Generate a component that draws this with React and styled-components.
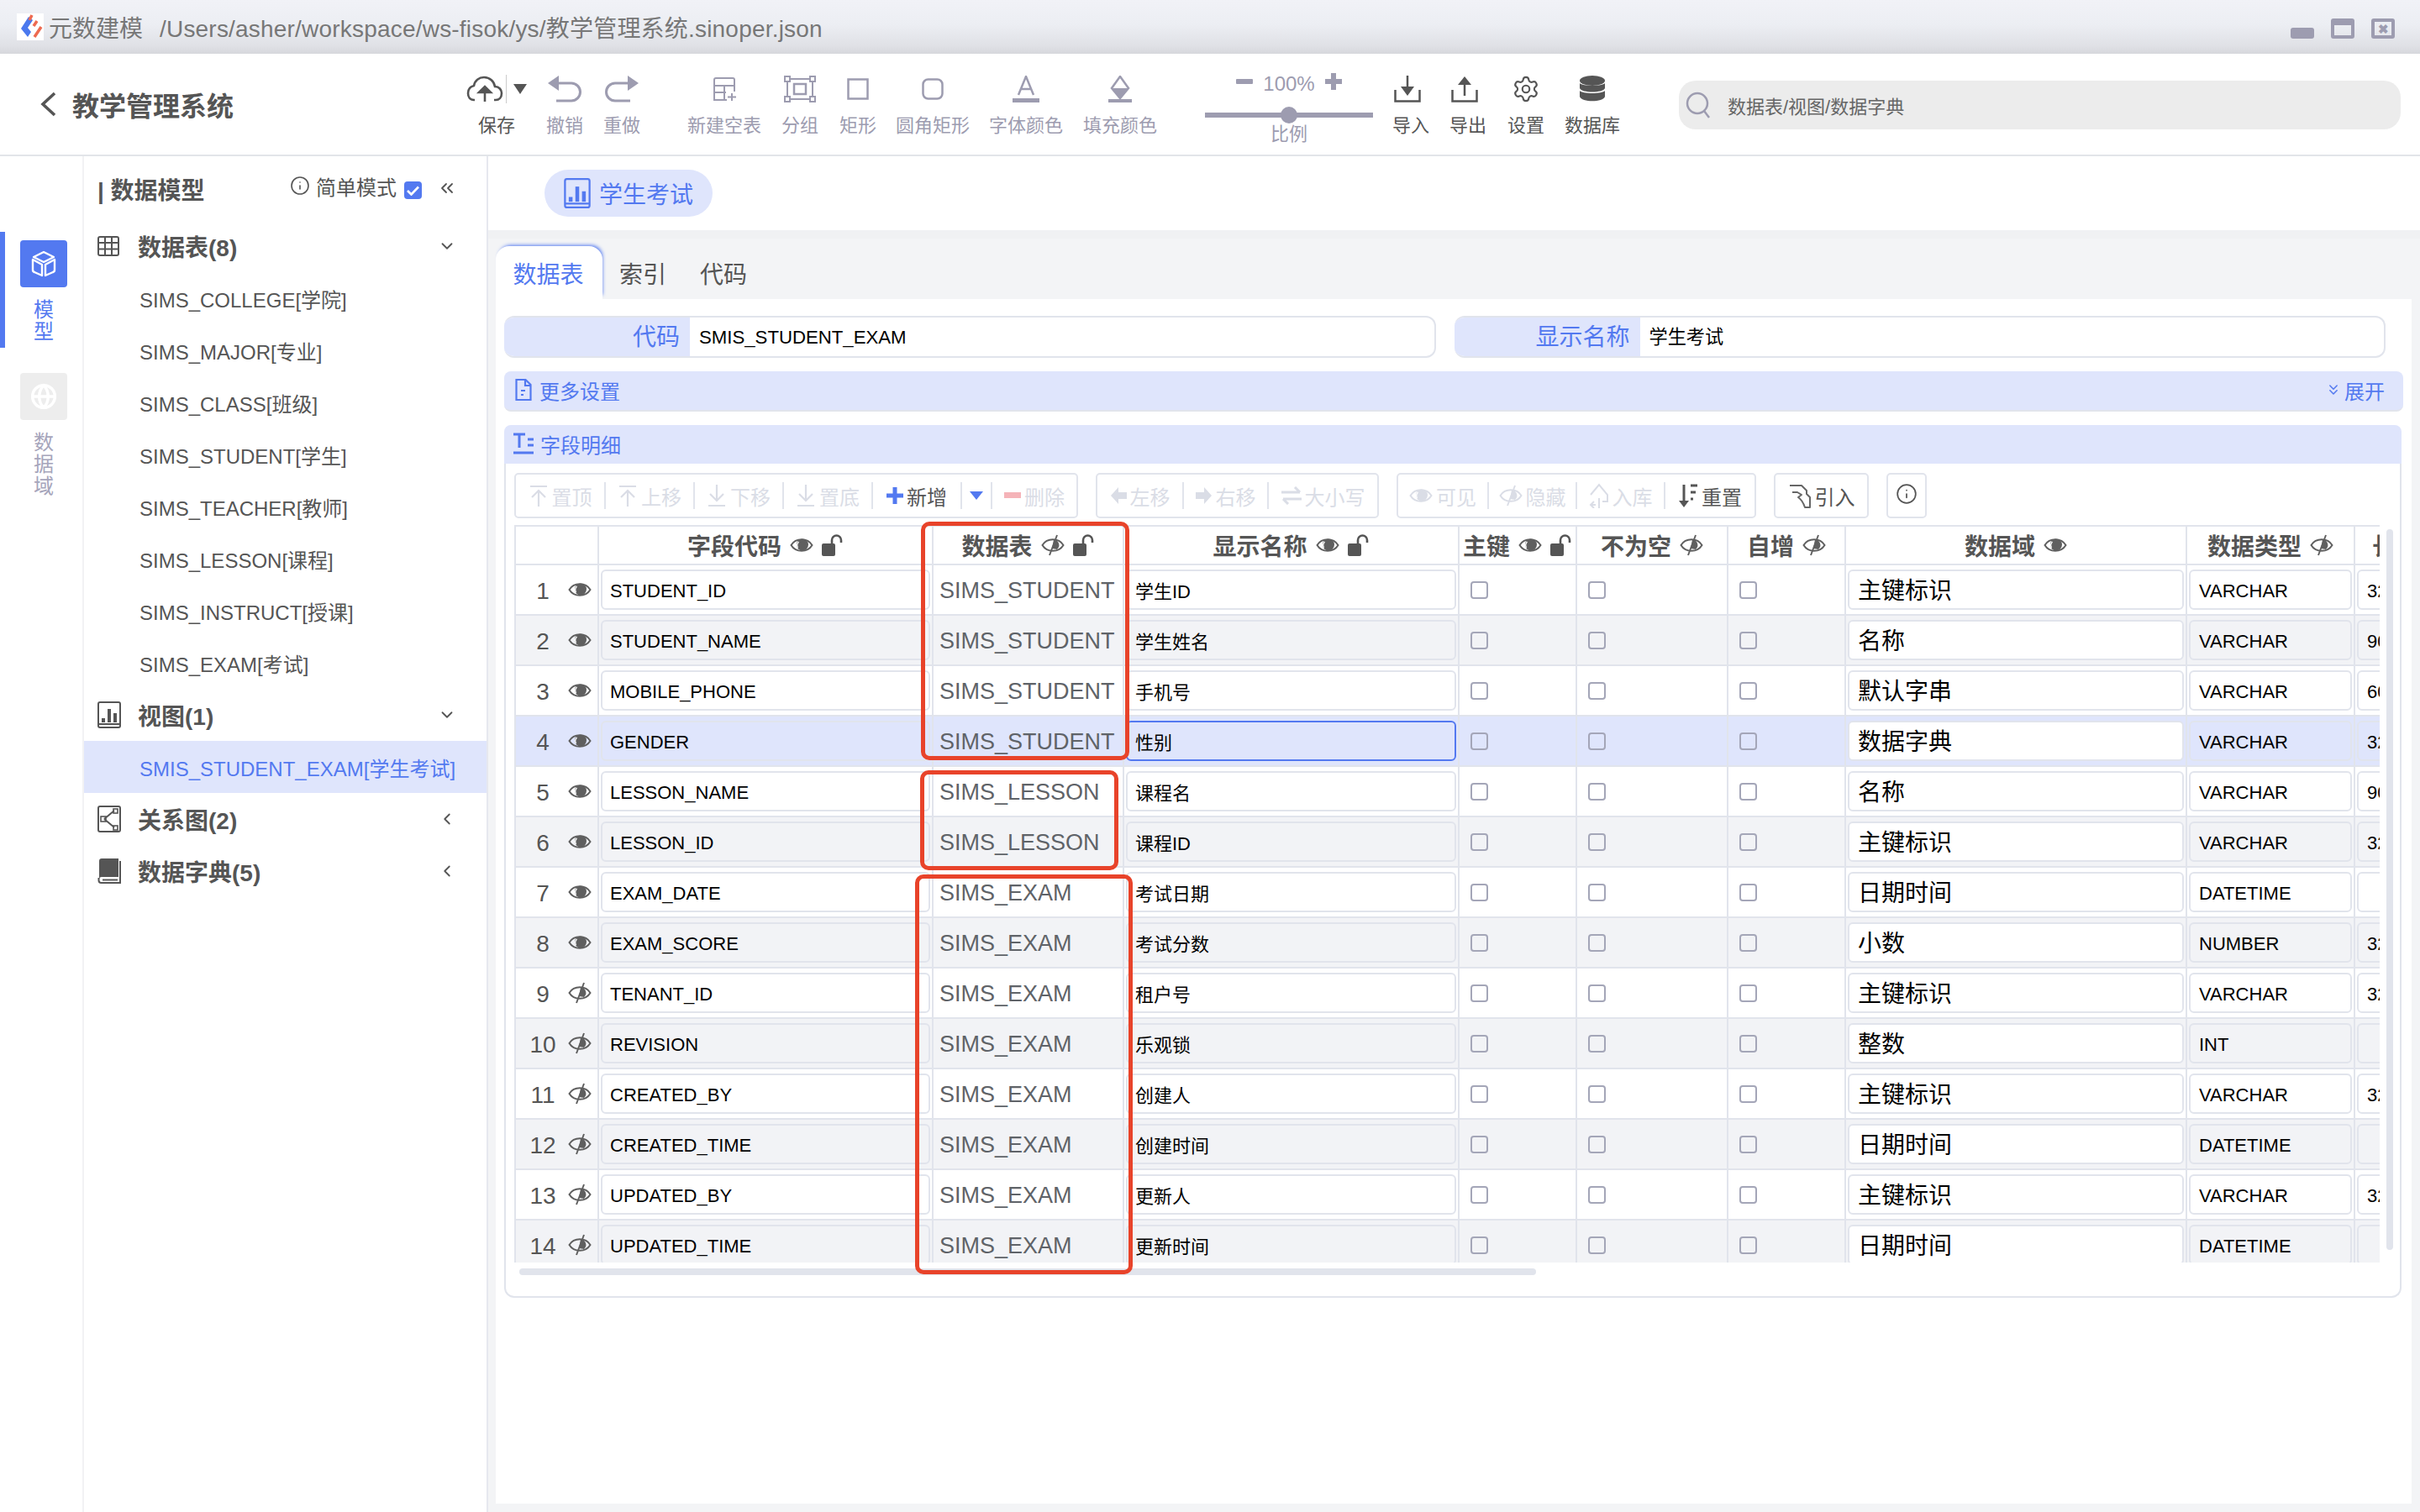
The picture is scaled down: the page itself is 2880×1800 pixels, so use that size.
import React from 'react';
import styled, { createGlobalStyle } from 'styled-components';
import { Settings, Info, ChevronDown, ChevronLeft, ChevronsLeft, ChevronsDown, Globe } from 'lucide-react';

const BLUE = '#5379f0';
const TINT = '#dfe5fc';
const LINE = '#e1e4ec';
const MUTED = '#9d9cb0';
const DARK = '#555555';
const OFF = '#dadde6';

const Global = createGlobalStyle`
  html, body { margin: 0; padding: 0; background: #fff; }
  * { box-sizing: border-box; }
  body { font-family: "Liberation Sans", "Noto Sans CJK SC", sans-serif; }
`;

const Page = styled.div`
  position: relative; width: 2880px; height: 1800px; overflow: hidden;
  display: flex; flex-direction: column; background: #fff;
`;

/* title bar */
const TitleBar = styled.div`
  height: 64px; flex: none; display: flex; align-items: center; padding: 0 30px 0 20px;
  background: linear-gradient(#f1f2f7 0%, #eceef3 45%, #e0e1e6 85%, #d6d7dc 100%);
  color: #777; font-size: 28px;
`;
const LogoBox = styled.div`
  width: 32px; height: 32px; background: #fff; margin-right: 6px; display: flex; flex: none;
`;
const AppName = styled.span`width: 132px; flex: none;`;
const FilePath = styled.span`flex: 1; white-space: nowrap; letter-spacing: 0.2px;`;
const WindowButtons = styled.div`display: flex; align-items: flex-end; gap: 20px; margin-top: 4px;`;
const WinMin = styled.div`width: 28px; height: 13px; background: ${MUTED}; border-radius: 3px;`;
const WinMax = styled.div`
  width: 28px; height: 24px; border: 4px solid ${MUTED}; border-top-width: 8px; border-radius: 3px;
`;
const WinClose = styled.div`
  width: 28px; height: 24px; border: 4px solid ${MUTED}; border-radius: 3px; display: flex;
  align-items: center; justify-content: center; color: ${MUTED}; font-size: 15px; font-weight: 700; line-height: 1;
`;

/* tool bar */
const TopBar = styled.div`
  height: 122px; flex: none; display: flex; align-items: flex-start; border-bottom: 2px solid #e2e5e9; padding-top: 20px;
`;
const Brand = styled.div`
  width: 550px; height: 56px; flex: none; display: flex; align-items: center; padding: 24px 0 0 48px;
  color: #555; font-size: 32px; font-weight: 700; gap: 18px;
`;
const Tool = styled.div`
  width: ${p => p.$w}px; margin-left: ${p => p.$ml || 0}px; flex: none; display: flex; flex-direction: column; align-items: center;
  color: ${p => (p.$on ? DARK : MUTED)}; font-size: 22px;
`;
const ToolIcon = styled.div`
  height: 44px; display: flex; align-items: center; justify-content: center; margin-left: ${p => p.$dx || 0}px;
`;
const ToolLabel = styled.div`margin-top: 8px; line-height: 28px; white-space: nowrap;`;
const SaveDivider = styled.div`width: 1px; height: 34px; background: #ccc; margin: 0 8px 0 3px;`;
const Scale = styled.div`
  width: 200px; margin-left: 48px; flex: none; display: flex; flex-direction: column; align-items: center; color: ${MUTED}; font-size: 22px;
`;
const ScaleTop = styled.div`height: 28px; margin-top: 2px; display: flex; align-items: center; gap: 12px; font-size: 24px;`;
const ScaleMinus = styled.div`width: 20px; height: 6px; margin-top: -6px; background: ${MUTED}; border-radius: 1px;`;
const ScalePlus = styled.div`
  position: relative; width: 20px; height: 20px; margin-top: -6px;
  background: linear-gradient(${MUTED}, ${MUTED}) center/100% 6px no-repeat, linear-gradient(${MUTED}, ${MUTED}) center/6px 100% no-repeat;
`;
const ScaleTrack = styled.div`
  position: relative; width: 200px; height: 6px; background: ${MUTED}; margin-top: 20px;
`;
const ScaleKnob = styled.div`
  position: absolute; left: 90px; top: -7px; width: 20px; height: 20px; border-radius: 50%; background: ${MUTED};
`;
const ScaleLabel = styled.div`line-height: 28px; margin-top: 6px;`;
const Search = styled.div`
  width: 859px; height: 58px; margin: 12px 0 0 58px; flex: none; background: #ececec; border-radius: 20px;
  display: flex; align-items: center; padding-left: 8px; gap: 20px; color: #666; font-size: 22px;
`;

/* body */
const Body = styled.div`flex: 1; display: flex; min-height: 0;`;
const Rail = styled.div`
  width: 100px; flex: none; border-right: 2px solid #f2f2f4; padding-top: 90px; display: flex; flex-direction: column; gap: 20px;
`;
const RailItem = styled.div`
  height: 138px; display: flex; flex-direction: column; align-items: center; padding: 10px 0 0 0;
  border-left: 6px solid ${p => (p.$active ? BLUE : 'transparent')};
  color: ${p => (p.$active ? BLUE : '#a6a5bb')}; font-size: 24px; line-height: 26px;
`;
const RailIcon = styled.div`
  width: 56px; height: 56px; flex: none; border-radius: 4px; display: flex; align-items: center; justify-content: center;
  background: ${p => (p.$active ? BLUE : '#ededed')};
`;
const RailText = styled.div`width: 26px; margin-top: 14px; text-align: center;`;

const Tree = styled.div`width: 481px; flex: none; border-right: 2px solid #e6e8ef;`;
const TreeHead = styled.div`
  height: 76px; display: flex; align-items: center; padding: 2px 0 0 16px; color: #555; font-size: 28px; font-weight: 700;
`;
const TreeTitle = styled.div`flex: none; width: 229px; white-space: nowrap;`;
const Simple = styled.div`
  display: flex; align-items: center; font-size: 24px; font-weight: 400; gap: 7px; margin-top: -8px; color: #555;
`;
const CheckBlue = styled.div`
  width: 21px; height: 21px; border-radius: 4px; background: ${BLUE}; margin: 3px 0 0 9px; display: flex; align-items: center; justify-content: center;
`;
const Collapse = styled.div`margin-left: 18px; display: flex; color: #555; margin-top: -2px;`;
const GroupRow = styled.div`
  height: 62px; display: flex; align-items: center; padding-left: 16px; color: #555; font-size: 28px; font-weight: 700;
`;
const GroupIcon = styled.div`width: 48px; flex: none; display: flex;`;
const GroupText = styled.div`flex: 1;`;
const GroupArrow = styled.div`width: 58px; flex: none; display: flex; color: #555;`;
const TreeItem = styled.div`
  height: 62px; display: flex; align-items: center; padding-left: 66px; font-size: 24px; white-space: nowrap;
  color: ${p => (p.$active ? BLUE : '#555')}; background: ${p => (p.$active ? TINT : 'transparent')};
`;

/* main */
const Main = styled.div`flex: 1; background: #f3f4f6; display: flex; flex-direction: column; min-width: 0;`;
const OpenTabs = styled.div`height: 98px; flex: none; background: #fff; padding: 16px 0 0 67px; border-bottom: 10px solid #f0f1f3;`;
const Pill = styled.div`
  width: 200px; height: 56px; border-radius: 28px; background: ${TINT}; color: ${BLUE}; font-size: 28px;
  display: flex; align-items: center; padding-left: 23px; gap: 10px;
`;
const TabStrip = styled.div`height: 72px; flex: none; display: flex; align-items: flex-end; padding-left: 9px;`;
const Tab = styled.div`
  height: 63px; display: flex; align-items: center; font-size: 28px; color: ${p => (p.$active ? BLUE : '#555')};
  ${p => p.$active
    ? `width: 127px; padding-right: 2px; justify-content: center; background: #fff; border-radius: 16px 16px 0 0; box-shadow: 2px -3px 4px -2px ${BLUE}; margin-right: 20px;`
    : 'margin-right: 40px;'}
`;
const Sheet = styled.div`
  flex: 1; background: #fff; margin: 0 10px 10px 9px; padding: 20px 10px 0; display: flex; flex-direction: column; position: relative; z-index: 1;
`;
const FormRow = styled.div`display: flex; gap: 22px; padding-right: 21px;`;
const Field = styled.div`
  flex: 1; height: 50px; display: flex; border-radius: 12px; border: 2px solid ${LINE}; border-left: 0; overflow: hidden; background: #fff;
`;
const FieldLabel = styled.div`
  flex: none; width: ${p => p.$w}px; background: ${TINT}; color: ${BLUE}; font-size: 28px; text-align: right; padding-right: 12px; margin: -2px 0; line-height: 52px;
`;
const FieldValue = styled.div`flex: 1; padding-left: 11px; color: #000; font-size: 22.200px; line-height: 48px;`;
const Bar = styled.div`
  height: 48px; margin-top: 16px; background: ${TINT}; border-radius: 8px; border-bottom: 2px solid ${LINE}; display: flex; align-items: center;
  padding: 0 22px 2px 13px; color: ${BLUE}; font-size: 24px; gap: 9px;
`;
const BarGrow = styled.div`flex: 1;`;
const Expand = styled.div`display: flex; align-items: center; gap: 3px;`;
const DetailHead = styled.div`
  height: 46px; margin-top: 16px; background: ${TINT}; border-radius: 8px 8px 0 0; display: flex; align-items: center;
  padding: 0 0 2px 11px; color: ${BLUE}; font-size: 24px; gap: 8px; width: 2258px;
`;
const Detail = styled.div`
  position: relative; width: 2258px; height: 993px; border: 2px solid ${LINE}; border-top: 0; border-radius: 0 0 12px 12px; padding: 11px 0 0 10px;
`;
const ActionRow = styled.div`display: flex; gap: 21px; height: 54px;`;
const ActionGroup = styled.div`
  display: flex; align-items: center; border: 2px solid ${LINE}; border-radius: 5px; height: 54px;
`;
const Action = styled.div`
  width: ${p => p.$w}px; height: 32px; display: flex; align-items: center; justify-content: center; gap: 4px; white-space: nowrap;
  font-size: 24px; color: ${p => (p.$on ? DARK : OFF)};
  border-right: ${p => (p.$last ? '0' : `2px solid ${LINE}`)};
`;
const InfoBtn = styled.div`
  width: 48px; height: 54px; border: 2px solid ${LINE}; border-radius: 5px; display: flex; justify-content: center; padding-top: 10px; color: #555;
`;
const TableClip = styled.div`width: 2220px; height: 878px; margin-top: 8px; overflow: hidden;`;
const COLS = '99px 398px 227px 399px 140px 180px 140px 406px 200px 200px';
const HeadRow = styled.div`
  display: grid; grid-template-columns: ${COLS}; height: 48px; width: 2389px; border-top: 2px solid ${LINE}; border-bottom: 2px solid ${LINE}; border-left: 2px solid ${LINE};
`;
const HeadCell = styled.div`
  display: flex; align-items: center; justify-content: ${p => (p.$start ? 'flex-start' : 'center')}; gap: 10px; border-right: 2px solid ${LINE}; padding-left: ${p => (p.$start ? 20 : 0)}px;
  font-size: 28px; font-weight: 700; color: #555; white-space: nowrap;
`;
const Row = styled.div`
  display: grid; grid-template-columns: ${COLS}; height: 60px; width: 2389px; border-bottom: 2px solid ${LINE}; border-left: 2px solid ${LINE};
  background: ${p => (p.$sel ? TINT : p.$alt ? '#f2f3f6' : '#fff')};
`;
const Cell = styled.div`border-right: 2px solid ${LINE}; display: flex; align-items: center; min-width: 0; padding: 0 2px;`;
const NumCell = styled(Cell)`padding: 0; font-size: 28px; color: #555;`;
const Num = styled.div`width: 60px; margin-left: 2px; padding-top: 3px; text-align: center;`;
const Input = styled.div`
  width: 100%; height: 48px; border: 2px solid ${p => (p.$focus ? BLUE : LINE)}; border-radius: 6px; padding: ${p => (p.$latin ? 3 : 0)}px 0 0 ${p => p.$pad || 10}px;
  display: flex; align-items: center; font-size: ${p => p.$size || 22}px; color: #000; white-space: nowrap; overflow: hidden;
  background: ${p => (p.$white ? '#fff' : 'transparent')};
`;
const DomainInput = styled(Input)`padding-bottom: 3px;`;
const Plain = styled.div`padding: 3px 0 0 5px; font-size: 27px; color: #5f6368; white-space: nowrap;`;
const CheckCell = styled(Cell)`padding-left: 13px;`;
const Check = styled.div`width: 21px; height: 21px; border: 2px solid #a4a6b8; border-radius: 4px;`;
const VScroll = styled.div`
  position: absolute; left: 2238px; top: 78px; width: 8px; height: 858px; border-radius: 4px; background: ${LINE};
`;
const HScroll = styled.div`width: 1210px; height: 8px; margin: 7px 0 0 6px; border-radius: 4px; background: ${LINE};`;
const Mark = styled.div`
  position: absolute; z-index: 5; left: ${p => p.$x}px; top: ${p => p.$y}px; width: ${p => p.$w}px; height: ${p => p.$h}px;
  border: 5px solid #e8432a; border-radius: 10px; pointer-events: none;
`;

/* drawings */
const S = ({ w, h, vb, children, ...rest }) => (
  <svg width={w} height={h} viewBox={vb || `0 0 ${w} ${h}`} fill="none" {...rest}>{children}</svg>
);
const Logo = () => (
  <S w={32} h={32}>
    <path d="M14 4l-9 14 8 10 4-6-4-5 6-9z" fill="#4a78ee" />
    <path d="M18 2l-3 6M24 9l-4 6M29 16l-8 12" stroke="#ee6a50" strokeWidth="3.5" />
  </S>
);
const IconBack = () => (
  <S w={20} h={30}><path d="M17 2L3 15l14 13" stroke={DARK} strokeWidth="3.6" /></S>
);
const IconSave = () => (
  <>
    <S w={44} h={32}>
      <path d="M10 29H9C4 29 2 25 2 21c0-5 3-8 7-9C10 6 15 2 21 2c7 0 12 5 13 11 5 0 8 4 8 8 0 5-3 8-7 8h-2" stroke={DARK} strokeWidth="2.6" />
      <path d="M22 31V14M15 20l7-7 7 7z" stroke={DARK} strokeWidth="2.6" fill={DARK} />
    </S>
    <SaveDivider />
    <S w={16} h={12}><path d="M0 0h16L8 12z" fill={DARK} /></S>
  </>
);
const IconUndo = ({ flip }) => (
  <S w={40} h={32} style={flip ? { transform: 'scaleX(-1)' } : undefined}>
    <path d="M0 9L13 0v18z" fill={MUTED} />
    <path d="M12 9h16a10 10 0 0 1 0 21H10" stroke={MUTED} strokeWidth="3" />
  </S>
);
const IconNewTable = () => (
  <S w={28} h={30}>
    <path d="M17 28H2V4a2 2 0 0 1 2-2h20a2 2 0 0 1 2 2v14M2 11h24M2 19h14M14 11v17" stroke={MUTED} strokeWidth="2" />
    <path d="M23 20v9M18 24.500h10" stroke={MUTED} strokeWidth="2" />
  </S>
);
const IconGroup = () => (
  <S w={38} h={32}>
    <rect x="4" y="4" width="30" height="24" stroke={MUTED} strokeWidth="2" />
    <rect x="12" y="10" width="14" height="12" stroke={MUTED} strokeWidth="2.5" />
    <path d="M1 1h6v6H1zM31 1h6v6h-6zM1 25h6v6H1zM31 25h6v6h-6z" fill="#fff" stroke={MUTED} strokeWidth="2" />
  </S>
);
const IconRect = ({ r }) => <S w={26} h={26}><rect x="1.500" y="1.500" width="23" height="23" rx={r} stroke={MUTED} strokeWidth="2.5" /></S>;
const IconFontColor = () => (
  <S w={32} h={32}>
    <path d="M7 23L16 1l9 22M10 16h12" stroke={MUTED} strokeWidth="2.5" />
    <rect y="27" width="32" height="5" fill={MUTED} />
  </S>
);
const IconFill = () => (
  <S w={28} h={32}>
    <path d="M14 1l10 14-10 12L4 15z" stroke={MUTED} strokeWidth="2.5" />
    <path d="M4 15h20L14 27z" fill={MUTED} />
    <rect y="28" width="28" height="4" fill={MUTED} />
  </S>
);
const IconImport = ({ up }) => (
  <S w={32} h={32}>
    <path d="M1.500 17v13.500h29V17" stroke={DARK} strokeWidth="2.5" />
    {up
      ? <><path d="M16 24V8" stroke={DARK} strokeWidth="2.5" /><path d="M8 11l8-10 8 10z" fill={DARK} /></>
      : <><path d="M16 0v14" stroke={DARK} strokeWidth="2.5" /><path d="M8 13h16l-8 11z" fill={DARK} /></>}
  </S>
);
const IconDb = () => (
  <S w={30} h={32}>
    <ellipse cx="15" cy="6" rx="15" ry="6" fill={DARK} />
    <path d="M0 9c3 4 27 4 30 0v6c-2 6-28 6-30 0zM0 18c3 4 27 4 30 0v7c-2 7-28 7-30 0z" fill={DARK} />
  </S>
);
const IconSearch = () => (
  <S w={30} h={32}>
    <circle cx="14" cy="14" r="12" stroke={MUTED} strokeWidth="2.5" />
    <path d="M22 23l6 8" stroke={MUTED} strokeWidth="2.5" />
  </S>
);
const IconCube = () => (
  <S w={30} h={32} stroke="#fff" strokeWidth="2.4" strokeLinejoin="round">
    <path d="M15 2l12 6-12 6-12-6z" />
    <path d="M2 11l11 6v13L4 26a3 3 0 0 1-2-3zM28 11l-11 6v13l9-4a3 3 0 0 0 2-3z" />
  </S>
);
const IconTable = () => (
  <S w={26} h={24}>
    <rect x="1" y="1" width="24" height="22" rx="2" stroke={DARK} strokeWidth="2" />
    <path d="M1 8h24M1 15.500h24M9 1v22M17 1v22" stroke={DARK} strokeWidth="2" />
  </S>
);
const IconChartBox = ({ c = DARK, size = 28 }) => (
  <S w={size} h={size + 4} vb="0 0 28 32">
    <rect x="1" y="1" width="26" height="30" rx="2" stroke={c} strokeWidth="2" />
    <path d="M1 27h26" stroke={c} strokeWidth="2" />
    <rect x="5" y="20" width="4" height="5" fill={c} /><rect x="12" y="9" width="4" height="16" fill={c} /><rect x="19" y="14" width="4" height="11" fill={c} />
  </S>
);
const IconShare = () => (
  <S w={28} h={32}>
    <rect x="1" y="1" width="26" height="30" rx="2" stroke={DARK} strokeWidth="2" />
    <path d="M8 16L20 6M8 16l12 10" stroke={DARK} strokeWidth="2" />
    <rect x="4" y="13" width="6" height="6" stroke={DARK} strokeWidth="1.600" /><rect x="19" y="4" width="5" height="5" stroke={DARK} strokeWidth="1.600" /><rect x="19" y="24" width="5" height="5" stroke={DARK} strokeWidth="1.600" />
  </S>
);
const IconBook = () => (
  <S w={28} h={32}>
    <path d="M2 25V4a3 3 0 0 1 3-3h20v22H5a3 3 0 0 0-3 3z" fill={DARK} />
    <path d="M1.500 24v3a3 3 0 0 0 3 3H27V4" stroke={DARK} strokeWidth="2" />
    <path d="M6 26.500h18" stroke={DARK} strokeWidth="2" />
  </S>
);
const IconEye = ({ c = '#5f5f5f' }) => (
  <S w={28} h={24}>
    <path d="M1.500 12C7 3 21 3 26.500 12 21 21 7 21 1.500 12z" stroke={c} strokeWidth="2" />
    <circle cx="15" cy="11.500" r="7" fill={c} />
    <path d="M9.500 15a6 6 0 0 1 1-7" stroke="#fff" strokeWidth="1.300" />
  </S>
);
const IconEyeOff = ({ c = '#5f5f5f' }) => (
  <S w={28} h={26}>
    <path d="M1.500 13C7 4 21 4 26.500 13 21 22 7 22 1.500 13z" stroke={c} strokeWidth="2" />
    <path d="M15 6.500a6.500 6.500 0 0 1 4 11.500l-6-1z" fill={c} />
    <path d="M19 1L10 25" stroke={c} strokeWidth="2" />
  </S>
);
const IconLock = () => (
  <S w={26} h={26}>
    <rect x="0" y="11" width="16" height="15" rx="2" fill={DARK} />
    <path d="M12 12V7a5.500 5.500 0 0 1 11 0v3" stroke={DARK} strokeWidth="2.6" />
  </S>
);
const FatArrow = ({ right }) => (
  <S w={20} h={26} style={right ? { transform: 'scaleX(-1)' } : undefined}>
    <path d="M10 3L1 13l9 10v-6h10V9H10z" fill={OFF} />
  </S>
);
const IconCase = () => (
  <S w={24} h={22}><path d="M0 7h22M16 1l6 6M24 15H2M8 21l-6-6" stroke={OFF} strokeWidth="3" /></S>
);
const IconReorder = ({ up }) => (
  <S w={24} h={26}><path d={up ? 'M2 2h20M12 26V8M4 15l8-8 8 8' : 'M2 25h20M12 0v19M4 11l8 8 8-8'} stroke={OFF} strokeWidth="2.2" /></S>
);
const IconPlus = () => <S w={20} h={22}><path d="M10 1v20M0 11h20" stroke={BLUE} strokeWidth="5" /></S>;
const Caret = () => <S w={16} h={12}><path d="M0 1h16L8 11z" fill={BLUE} /></S>;
const IconMinus = () => <S w={20} h={10}><rect y="1" width="20" height="7" fill="#f5b3b8" /></S>;
const IconStore = () => (
  <S w={24} h={30}><path d="M2 14L12 2l10 12v8h-6M12 30v-12M8 26l-5 0M6 22l-4 4 4 4" stroke={OFF} strokeWidth="2" /></S>
);
const IconResetSort = () => (
  <S w={24} h={30}>
    <path d="M7 2v22" stroke={DARK} strokeWidth="3" /><path d="M1 21h12l-6 8z" fill={DARK} />
    <path d="M15 3h8M15 11h6M15 19h3" stroke={DARK} strokeWidth="3" />
  </S>
);
const IconHand = () => (
  <S w={28} h={32}>
    <path d="M2 4h14l6 6v4l4 4v12h-6c-2-6-5-10-8-12l4-3-5-3H5" stroke="#666" strokeWidth="2" strokeLinejoin="round" />
  </S>
);
const IconDoc = () => (
  <S w={20} h={28}>
    <path d="M1.500 2h11l6 6v18h-17zM12 2v7h6M7 15h5M7 20h3" stroke={BLUE} strokeWidth="2.2" />
  </S>
);
const IconFields = () => (
  <S w={24} h={26}>
    <path d="M0 2h14M7 2v16M0 24h24M17 8h7M17 15h7" stroke={BLUE} strokeWidth="3" />
  </S>
);

const fields = [
  ['STUDENT_ID', 'SIMS_STUDENT', '学生ID', '主键标识', 'VARCHAR', '32'],
  ['STUDENT_NAME', 'SIMS_STUDENT', '学生姓名', '名称', 'VARCHAR', '90'],
  ['MOBILE_PHONE', 'SIMS_STUDENT', '手机号', '默认字串', 'VARCHAR', '60'],
  ['GENDER', 'SIMS_STUDENT', '性别', '数据字典', 'VARCHAR', '32'],
  ['LESSON_NAME', 'SIMS_LESSON', '课程名', '名称', 'VARCHAR', '90'],
  ['LESSON_ID', 'SIMS_LESSON', '课程ID', '主键标识', 'VARCHAR', '32'],
  ['EXAM_DATE', 'SIMS_EXAM', '考试日期', '日期时间', 'DATETIME', ''],
  ['EXAM_SCORE', 'SIMS_EXAM', '考试分数', '小数', 'NUMBER', '32'],
  ['TENANT_ID', 'SIMS_EXAM', '租户号', '主键标识', 'VARCHAR', '32'],
  ['REVISION', 'SIMS_EXAM', '乐观锁', '整数', 'INT', ''],
  ['CREATED_BY', 'SIMS_EXAM', '创建人', '主键标识', 'VARCHAR', '32'],
  ['CREATED_TIME', 'SIMS_EXAM', '创建时间', '日期时间', 'DATETIME', ''],
  ['UPDATED_BY', 'SIMS_EXAM', '更新人', '主键标识', 'VARCHAR', '32'],
  ['UPDATED_TIME', 'SIMS_EXAM', '更新时间', '日期时间', 'DATETIME', ''],
];

const tables = ['SIMS_COLLEGE[学院]', 'SIMS_MAJOR[专业]', 'SIMS_CLASS[班级]', 'SIMS_STUDENT[学生]', 'SIMS_TEACHER[教师]', 'SIMS_LESSON[课程]', 'SIMS_INSTRUCT[授课]', 'SIMS_EXAM[考试]'];

export default function App() {
  return (
    <Page>
      <Global />
      <TitleBar>
        <LogoBox><Logo /></LogoBox>
        <AppName>元数建模</AppName>
        <FilePath>/Users/asher/workspace/ws-fisok/ys/教学管理系统.sinoper.json</FilePath>
        <WindowButtons>
          <WinMin /><WinMax /><WinClose>✖</WinClose>
        </WindowButtons>
      </TitleBar>

      <TopBar>
        <Brand><IconBack />教学管理系统</Brand>
        <Tool $w={82} $on><ToolIcon><IconSave /></ToolIcon><ToolLabel>保存</ToolLabel></Tool>
        <Tool $w={80}><ToolIcon><IconUndo /></ToolIcon><ToolLabel>撤销</ToolLabel></Tool>
        <Tool $w={56}><ToolIcon><IconUndo flip /></ToolIcon><ToolLabel>重做</ToolLabel></Tool>
        <Tool $w={116} $ml={36}><ToolIcon><IconNewTable /></ToolIcon><ToolLabel>新建空表</ToolLabel></Tool>
        <Tool $w={64}><ToolIcon><IconGroup /></ToolIcon><ToolLabel>分组</ToolLabel></Tool>
        <Tool $w={74}><ToolIcon><IconRect r={0} /></ToolIcon><ToolLabel>矩形</ToolLabel></Tool>
        <Tool $w={104}><ToolIcon><IconRect r={6} /></ToolIcon><ToolLabel>圆角矩形</ToolLabel></Tool>
        <Tool $w={118}><ToolIcon><IconFontColor /></ToolIcon><ToolLabel>字体颜色</ToolLabel></Tool>
        <Tool $w={106}><ToolIcon><IconFill /></ToolIcon><ToolLabel>填充颜色</ToolLabel></Tool>
        <Scale>
          <ScaleTop><ScaleMinus /><span>100%</span><ScalePlus /></ScaleTop>
          <ScaleTrack><ScaleKnob /></ScaleTrack>
          <ScaleLabel>比例</ScaleLabel>
        </Scale>
        <Tool $w={66} $ml={12} $on><ToolIcon $dx={-8}><IconImport /></ToolIcon><ToolLabel>导入</ToolLabel></Tool>
        <Tool $w={70} $on><ToolIcon $dx={-8}><IconImport up /></ToolIcon><ToolLabel>导出</ToolLabel></Tool>
        <Tool $w={68} $on><ToolIcon><Settings size={34} color={DARK} strokeWidth={1.5} /></ToolIcon><ToolLabel>设置</ToolLabel></Tool>
        <Tool $w={90} $on><ToolIcon><IconDb /></ToolIcon><ToolLabel>数据库</ToolLabel></Tool>
        <Search><IconSearch />数据表/视图/数据字典</Search>
      </TopBar>

      <Body>
        <Rail>
          <RailItem $active>
            <RailIcon $active><IconCube /></RailIcon>
            <RailText>模型</RailText>
          </RailItem>
          <RailItem>
            <RailIcon><Globe size={32} color="#fff" strokeWidth={2.6} /></RailIcon>
            <RailText>数据域</RailText>
          </RailItem>
        </Rail>

        <Tree>
          <TreeHead>
            <TreeTitle>| 数据模型</TreeTitle>
            <Simple><Info size={24} strokeWidth={1.6} />简单模式</Simple>
            <CheckBlue>
              <S w={15} h={12}><path d="M1 6l4.500 4.500L14 1.500" stroke="#fff" strokeWidth="2.6" /></S>
            </CheckBlue>
            <Collapse><ChevronsLeft size={24} strokeWidth={1.8} /></Collapse>
          </TreeHead>
          <GroupRow>
            <GroupIcon><IconTable /></GroupIcon><GroupText>数据表(8)</GroupText>
            <GroupArrow><ChevronDown size={22} strokeWidth={2} /></GroupArrow>
          </GroupRow>
          {tables.map(t => <TreeItem key={t}>{t}</TreeItem>)}
          <GroupRow>
            <GroupIcon><IconChartBox /></GroupIcon><GroupText>视图(1)</GroupText>
            <GroupArrow><ChevronDown size={22} strokeWidth={2} /></GroupArrow>
          </GroupRow>
          <TreeItem $active>SMIS_STUDENT_EXAM[学生考试]</TreeItem>
          <GroupRow>
            <GroupIcon><IconShare /></GroupIcon><GroupText>关系图(2)</GroupText>
            <GroupArrow><ChevronLeft size={22} strokeWidth={2} /></GroupArrow>
          </GroupRow>
          <GroupRow>
            <GroupIcon><IconBook /></GroupIcon><GroupText>数据字典(5)</GroupText>
            <GroupArrow><ChevronLeft size={22} strokeWidth={2} /></GroupArrow>
          </GroupRow>
        </Tree>

        <Main>
          <OpenTabs><Pill><IconChartBox c={BLUE} size={32} />学生考试</Pill></OpenTabs>
          <TabStrip>
            <Tab $active>数据表</Tab><Tab>索引</Tab><Tab>代码</Tab>
          </TabStrip>
          <Sheet>
            <FormRow>
              <Field><FieldLabel $w={221}>代码</FieldLabel><FieldValue>SMIS_STUDENT_EXAM</FieldValue></Field>
              <Field><FieldLabel $w={221}>显示名称</FieldLabel><FieldValue>学生考试</FieldValue></Field>
            </FormRow>
            <Bar>
              <IconDoc />更多设置<BarGrow />
              <Expand><ChevronsDown size={20} strokeWidth={1.8} />展开</Expand>
            </Bar>
            <DetailHead><IconFields />字段明细</DetailHead>
            <Detail>
              <ActionRow>
                <ActionGroup>
                  <Action $w={107}><IconReorder up />置顶</Action>
                  <Action $w={106}><IconReorder up />上移</Action>
                  <Action $w={106}><IconReorder />下移</Action>
                  <Action $w={106}><IconReorder />置底</Action>
                  <Action $w={106} $on><IconPlus />新增</Action>
                  <Action $w={36}><Caret /></Action>
                  <Action $w={100} $last><IconMinus />删除</Action>
                </ActionGroup>
                <ActionGroup>
                  <Action $w={103}><FatArrow />左移</Action>
                  <Action $w={101}><FatArrow right />右移</Action>
                  <Action $w={129} $last><IconCase />大小写</Action>
                </ActionGroup>
                <ActionGroup>
                  <Action $w={108}><IconEye c={OFF} />可见</Action>
                  <Action $w={105}><IconEyeOff c={OFF} />隐藏</Action>
                  <Action $w={105}><IconStore />入库</Action>
                  <Action $w={106} $last $on><IconResetSort />重置</Action>
                </ActionGroup>
                <ActionGroup>
                  <Action $w={109} $last $on><IconHand />引入</Action>
                </ActionGroup>
                <InfoBtn><Info size={26} strokeWidth={1.6} /></InfoBtn>
              </ActionRow>
              <TableClip>
                <HeadRow>
                  <HeadCell />
                  <HeadCell>字段代码<IconEye /><IconLock /></HeadCell>
                  <HeadCell>数据表<IconEyeOff /><IconLock /></HeadCell>
                  <HeadCell>显示名称<IconEye /><IconLock /></HeadCell>
                  <HeadCell>主键<IconEye /><IconLock /></HeadCell>
                  <HeadCell>不为空<IconEyeOff /></HeadCell>
                  <HeadCell>自增<IconEyeOff /></HeadCell>
                  <HeadCell>数据域<IconEye /></HeadCell>
                  <HeadCell>数据类型<IconEyeOff /></HeadCell>
                  <HeadCell $start>长度</HeadCell>
                </HeadRow>
                {fields.map((f, i) => (
                  <Row key={f[0]} $alt={i % 2 === 1} $sel={i === 3}>
                    <NumCell><Num>{i + 1}</Num>{i < 8 ? <IconEye /> : <IconEyeOff />}</NumCell>
                    <Cell><Input $latin $pad={9}>{f[0]}</Input></Cell>
                    <Cell><Plain>{f[1]}</Plain></Cell>
                    <Cell><Input $focus={i === 3} $pad={9}>{f[2]}</Input></Cell>
                    <CheckCell><Check /></CheckCell>
                    <CheckCell><Check /></CheckCell>
                    <CheckCell><Check /></CheckCell>
                    <Cell><DomainInput $white $size={28} $pad={10}>{f[3]}</DomainInput></Cell>
                    <Cell><Input $latin $pad={10}>{f[4]}</Input></Cell>
                    <Cell><Input $latin $pad={10}>{f[5]}</Input></Cell>
                  </Row>
                ))}
              </TableClip>
              <HScroll />
              <VScroll />
            </Detail>
          </Sheet>
        </Main>
      </Body>

      <Mark $x={1096} $y={621} $w={248} $h={284} />
      <Mark $x={1095} $y={917} $w={236} $h={119} />
      <Mark $x={1089} $y={1041} $w={259} $h={476} />
    </Page>
  );
}
